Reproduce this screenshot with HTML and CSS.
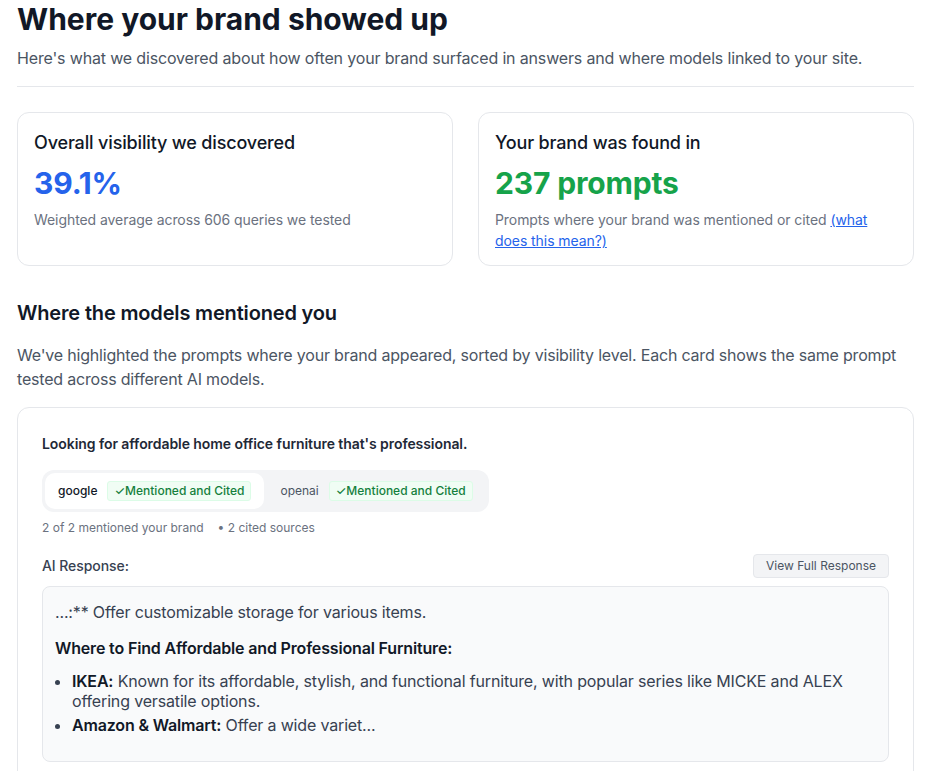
FILE: index.html
```html
<!DOCTYPE html>
<html>
<head>
<meta charset="utf-8">
<link rel="stylesheet" href="styles.css">
</head>
<body>
<div class="page">
  <header class="head">
    <h1 class="title">Where your brand showed up</h1>
    <p class="subtitle">Here's what we discovered about how often your brand surfaced in answers and where models linked to your site.</p>
  </header>

  <div class="stats">
    <div class="stat-card">
      <div class="stat-label">Overall visibility we discovered</div>
      <div class="stat-value blue">39.1%</div>
      <div class="stat-desc">Weighted average across 606 queries we tested</div>
    </div>
    <div class="stat-card">
      <div class="stat-label">Your brand was found in</div>
      <div class="stat-value green">237 prompts</div>
      <div class="stat-desc">Prompts where your brand was mentioned or cited <a class="link" href="#">(what does this mean?)</a></div>
    </div>
  </div>

  <h2 class="section-title">Where the models mentioned you</h2>
  <p class="section-desc">We've highlighted the prompts where your brand appeared, sorted by visibility level. Each card shows the same prompt tested across different AI models.</p>

  <div class="prompt-card">
    <div class="prompt-text">Looking for affordable home office furniture that's professional.</div>
    <div class="tabs">
      <div class="tab active"><span class="tab-name">google</span><span class="badge">✓Mentioned and Cited</span></div>
      <div class="tab"><span class="tab-name">openai</span><span class="badge">✓Mentioned and Cited</span></div>
    </div>
    <div class="meta"><span>2 of 2 mentioned your brand</span><span>• 2 cited sources</span></div>
    <div class="resp-head">
      <span class="resp-label">AI Response:</span>
      <button class="btn">View Full Response</button>
    </div>
    <div class="resp-box">
      <p class="resp-p">...:** Offer customizable storage for various items.</p>
      <p class="resp-h">Where to Find Affordable and Professional Furniture:</p>
      <ul class="resp-list">
        <li><b>IKEA:</b> Known for its affordable, stylish, and functional furniture, with popular series like MICKE and ALEX offering versatile options.</li>
        <li><b>Amazon &amp; Walmart:</b> Offer a wide variet...</li>
      </ul>
    </div>
  </div>
</div>
</body>
</html>
```
FILE: styles.css
```css
* { box-sizing: border-box; }
html, body { margin: 0; padding: 0; background: #ffffff; }
body {
  font-family: Inter, "Noto Sans", "Liberation Sans", sans-serif;
  color: #111827;
  letter-spacing: -0.01em;
}
.page {
  width: 897px;
  margin-left: 17px;
  padding-top: 1px;
}
.head {
  border-bottom: 1px solid #e5e7eb;
  padding-bottom: 16px;
}
.title {
  margin: 0;
  font-size: 30px;
  line-height: 36px;
  font-weight: 700;
  color: #111827;
  letter-spacing: 0;
}
.subtitle {
  margin: 9px 0 0;
  font-size: 16px;
  line-height: 24px;
  color: #4b5563;
}
.stats {
  display: grid;
  grid-template-columns: 1fr 1fr;
  gap: 25px;
  margin-top: 25px;
}
.stat-card {
  border: 1px solid #e5e7eb;
  border-radius: 12px;
  padding: 17px 16px 12px;
  min-height: 154px;
}
.stat-label {
  font-size: 18px;
  line-height: 26px;
  font-weight: 500;
  color: #111827;
}
.stat-value {
  margin-top: 9px;
  font-size: 30px;
  line-height: 36px;
  font-weight: 700;
}
.stat-value.blue { color: #2563eb; }
.stat-value.green { color: #16a34a; }
.stat-desc {
  margin-top: 8px;
  font-size: 14px;
  line-height: 21px;
  color: #6b7280;
  letter-spacing: -0.005em;
}
.link { color: #2563eb; text-decoration: underline; }
.section-title {
  margin: 33px 0 0;
  font-size: 20px;
  line-height: 28px;
  font-weight: 600;
  color: #111827;
}
.section-desc {
  margin: 16px 0 0;
  font-size: 16px;
  line-height: 24px;
  color: #4b5563;
  letter-spacing: -0.012em;
}
.prompt-card {
  margin-top: 16px;
  border: 1px solid #e5e7eb;
  border-radius: 12px;
  padding: 26px 24px 24px;
}
.prompt-text {
  font-size: 14px;
  line-height: 20px;
  font-weight: 600;
  color: #1f2937;
  letter-spacing: -0.005em;
}
.tabs {
  display: inline-flex;
  margin-top: 16px;
  background: #f3f4f6;
  border-radius: 12px;
  padding: 3px;
  gap: 3px;
}
.tab {
  display: flex;
  align-items: center;
  gap: 10px;
  padding: 8px 13px;
  border-radius: 10px;
  font-size: 12px;
  color: #4b5563;
  letter-spacing: 0;
}
.tab.active { background: #ffffff; color: #111827; font-weight: 500; }
.tab-name { line-height: 16px; }
.badge {
  font-size: 12px;
  line-height: 18px;
  font-weight: 500;
  color: #15803d;
  background: #f0fdf4;
  border: 1px solid #dcfce7;
  border-radius: 3px;
  padding: 0 6px;
}
.meta {
  display: flex;
  gap: 14px;
  margin-top: 8px;
  font-size: 12px;
  line-height: 16px;
  color: #6b7280;
  letter-spacing: 0;
}
.resp-head {
  display: flex;
  justify-content: space-between;
  align-items: center;
  margin-top: 18px;
}
.resp-label {
  font-size: 14px;
  line-height: 20px;
  font-weight: 500;
  color: #374151;
  letter-spacing: -0.005em;
}
.btn {
  font-family: inherit;
  letter-spacing: 0;
  font-size: 12px;
  line-height: 16px;
  color: #4b5563;
  background: #f3f4f6;
  border: 1px solid #e5e7eb;
  border-radius: 4px;
  padding: 3px 12px;
}
.resp-box {
  margin-top: 8px;
  background: #f9fafb;
  border: 1px solid #e5e7eb;
  border-radius: 8px;
  padding: 15px 12px 26px;
  font-size: 16px;
  line-height: 20px;
  color: #374151;
}
.resp-p { margin: 0; }
.resp-h { margin: 16px 0 0; font-weight: 600; color: #111827; }
.resp-list {
  margin: 13px 0 0;
  padding-left: 17px;
}
.resp-list li + li { margin-top: 4px; }
.resp-list b { font-weight: 600; color: #111827; }
```
